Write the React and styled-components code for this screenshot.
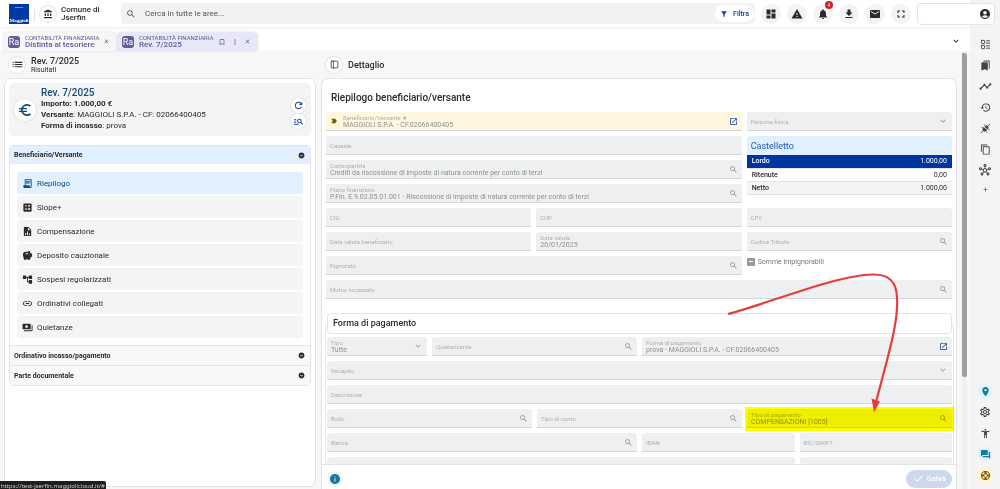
import React from "react";
import styled, { createGlobalStyle, css } from "styled-components";
import { LayoutList, PanelLeft } from "lucide-react";
import { PiPlugsConnectedFill } from "react-icons/pi";
import {
  MdAccessibilityNew,
  MdAccountBalance,
  MdAccountCircle,
  MdAccountTree,
  MdAdd,
  MdBookmarkBorder,
  MdBookmarks,
  MdCalculate,
  MdCheck,
  MdClose,
  MdContentCopy,
  MdDashboard,
  MdDownload,
  MdEmail,
  MdEuroSymbol,
  MdExpandMore,
  MdFilterAlt,
  MdForum,
  MdFullscreen,
  MdHistory,
  MdInfo,
  MdInsertLink,
  MdLabelImportant,
  MdList,
  MdManageSearch,
  MdMoreVert,
  MdNotifications,
  MdOpenInNew,
  MdOutlineHub,
  MdPayments,
  MdPlace,
  MdReceiptLong,
  MdRefresh,
  MdSavings,
  MdSearch,
  MdOutlineSettings,
  MdSupport,
  MdTimeline,
  MdWarning,
  MdExpandCircleDown,
} from "react-icons/md";

const colors = {
  ink: "#2b2b2b",
  blue: "#0b3ea0",
  navy: "#174a7c",
  sky: "#e0f0ff",
  violet: "#5f5c98",
  grey: "#f4f4f4",
  line: "#e3e4e5",
  field: "#eeeff0",
  teal: "#137a9c",
};

const GlobalStyle = createGlobalStyle`
  * {
    box-sizing: border-box;
  }

  body {
    margin: 0;
    color: ${colors.ink};
    font-family: Roboto, "Liberation Sans", sans-serif;
    font-size: 8px;
  }

  button, input, select {
    font: inherit;
    color: inherit;
  }

  button {
    border: 0;
    padding: 0;
    background: none;
    cursor: pointer;
  }

  svg {
    display: block;
    flex: none;
  }
`;

const Page = styled.div`
  display: flex;
  height: 100vh;
  overflow: hidden;
  background: #f7f7f7;
`;

const Main = styled.div`
  flex: 1;
  min-width: 0;
  display: flex;
  flex-direction: column;
`;

const Header = styled.header`
  display: flex;
  align-items: center;
  gap: 6px;
  height: 27px;
  flex: none;
  padding-left: 9px;
  background: #fff;
  box-shadow: 0 1px 3px rgba(0, 0, 0, 0.08);
  z-index: 1;
`;

const Brand = styled.div`
  display: flex;
  align-items: center;
  gap: 5px;
  width: 106px;
`;

const Divider = styled.span`
  width: 1px;
  height: 14px;
  background: ${colors.line};
`;

const OrgName = styled.strong`
  font-weight: 500;
  line-height: 8px;
  width: 44px;
`;

const RoundButton = styled.button`
  display: flex;
  align-items: center;
  justify-content: center;
  flex: none;
  width: ${(p) => p.$size || 16}px;
  height: ${(p) => p.$size || 16}px;
  border-radius: 50%;
  background: ${(p) => p.$bg || "#fff"};
  color: ${(p) => p.$color || colors.ink};
  box-shadow: ${(p) => (p.$flat ? "none" : `0 0 0 1px ${colors.line}`)};
`;

const Search = styled.label`
  flex: 1;
  display: flex;
  align-items: center;
  gap: 9px;
  height: 21px;
  padding: 0 1px 0 5px;
  border-radius: 4px;
  background: #f1f2f3;
  color: #555;
`;

const SearchInput = styled.input`
  flex: 1;
  min-width: 0;
  border: 0;
  padding: 0;
  background: none;
  outline: none;

  &::placeholder {
    color: #555;
    opacity: 1;
  }
`;

const FilterButton = styled.button`
  display: flex;
  align-items: center;
  gap: 5px;
  height: 17px;
  padding: 0 5px;
  border-radius: 9px;
  background: #fff;
  color: ${colors.blue};
  font-size: 7px;
  font-weight: 500;
`;

const Actions = styled.nav`
  display: flex;
  gap: 6px;
`;

const Notifications = styled.div`
  position: relative;
`;

const Badge = styled.span`
  position: absolute;
  top: -3px;
  right: 0;
  width: 8px;
  height: 8px;
  border-radius: 50%;
  background: #cb2027;
  color: #fff;
  font-size: 5px;
  line-height: 8px;
  text-align: center;
`;

const UserBox = styled.div`
  display: flex;
  align-items: center;
  justify-content: flex-end;
  flex: none;
  width: 78px;
  height: 22px;
  margin-right: -25px;
  padding-right: 3px;
  border: 1px solid ${colors.line};
  border-radius: 4px;
  background: #fff;
`;

const TabBar = styled.div`
  display: flex;
  align-items: flex-end;
  height: 24px;
  flex: none;
  padding: 0 9px 0 3px;
  background: #fff;
`;

const Tab = styled.div`
  display: flex;
  align-items: center;
  height: 19px;
  width: ${(p) => (p.$active ? 141 : 114)}px;
  padding: 0 7px 0 5px;
  border-radius: 5px 5px 0 0;
  background: ${(p) => (p.$active ? "#e8e7f5" : "#f6f6f7")};
  box-shadow: 0 0 2px rgba(0, 0, 0, 0.15);
  color: ${colors.violet};
`;

const TabIcon = styled.span`
  width: 12px;
  height: 12px;
  border-radius: 3px;
  background: ${colors.violet};
  color: #fff;
  font-size: 9px;
  line-height: 12px;
  text-align: center;
`;

const TabText = styled.div`
  flex: 1;
  margin-left: 5px;
  font-weight: 500;
  line-height: 8px;
  white-space: nowrap;
`;

const Overline = styled.div`
  font-size: 6px;
  font-weight: 400;
  line-height: 7px;
`;

const TabActions = styled.div`
  display: flex;
  gap: 5px;
`;

const TabsMenu = styled.button`
  margin: 0 0 5px auto;
`;

const Content = styled.div`
  flex: 1;
  min-height: 0;
  display: flex;
  gap: 5px;
  padding-left: 4px;
`;

const Side = styled.section`
  flex: 0 0 312px;
  display: flex;
  flex-direction: column;
  padding-bottom: 2px;
`;

const PaneHeader = styled.div`
  display: flex;
  align-items: center;
  gap: 6px;
  height: 27px;
  flex: none;
  padding-left: 5px;
`;

const PaneTitle = styled.h2`
  margin: 0;
  font-size: 9px;
  font-weight: 500;
  line-height: 10px;
`;

const PaneSubtitle = styled.p`
  margin: 0;
  font-size: 7px;
  line-height: 8px;
`;

const Card = styled.div`
  flex: 1;
  min-height: 0;
  display: flex;
  flex-direction: column;
  border: 1px solid ${colors.line};
  border-radius: 7px;
  background: #fff;
`;

const SideCard = styled(Card)`
  gap: 9px;
  padding: 4px;
`;

const Summary = styled.div`
  display: flex;
  align-items: center;
  gap: 5px;
  height: 53px;
  padding: 0 5px;
  border-radius: 6px;
  background: ${colors.grey};
`;

const SummaryText = styled.div`
  flex: 1;
  padding-bottom: 2px;
  line-height: 11px;

  b {
    font-weight: 700;
  }
`;

const SummaryTitle = styled.h3`
  margin: 0;
  font-size: 10px;
  font-weight: 500;
  color: ${colors.navy};
`;

const SummaryActions = styled.div`
  display: flex;
  flex-direction: column;
  gap: 1px;
  padding-top: 7px;
`;

const Accordion = styled.div`
  border: 1px solid ${colors.line};
  border-radius: 4px;
  overflow: hidden;
`;

const AccordionHeader = styled.button`
  display: flex;
  align-items: center;
  justify-content: space-between;
  width: 100%;
  height: ${(p) => (p.$open ? 18 : 20)}px;
  padding: 0 5px 0 4px;
  border-top: ${(p) => (p.$open ? "0" : `1px solid ${colors.line}`)};
  background: ${(p) => (p.$open ? colors.sky : "#f8f8f8")};
  font-size: 7px;
  font-weight: 700;
`;

const Menu = styled.nav`
  display: flex;
  flex-direction: column;
  gap: 2px;
  padding: 8px 7px 7px;
`;

const MenuItem = styled.a`
  display: flex;
  align-items: center;
  gap: 4px;
  height: 22px;
  padding: 0 5px;
  border-radius: 3px;
  background: ${(p) => (p.$active ? colors.sky : colors.grey)};
  color: ${(p) => (p.$active ? colors.navy : colors.ink)};
  text-decoration: none;
`;

const Detail = styled.section`
  flex: 1;
  min-width: 0;
  display: flex;
  flex-direction: column;
`;

const DetailCard = styled(Card)`
  border-bottom: 0;
  border-radius: 7px 7px 0 0;
`;

const FormArea = styled.form`
  flex: 1;
  min-height: 0;
  overflow: hidden;
  padding: 12px 2px 0 3px;
`;

const FormTitle = styled.h3`
  margin: 0 0 8px 6px;
  font-size: 10px;
  font-weight: 500;
  line-height: 13px;
`;

const Grid = styled.div`
  display: grid;
  grid-template-columns: repeat(12, 1fr);
  grid-auto-rows: 19px;
  gap: 5px;
`;

const MainGrid = styled(Grid)`
  padding: 0 2px 0 1px;
`;

const Group = styled.fieldset`
  margin: 14px 0 0;
  padding: 0 1px;
  border: 1px solid ${colors.line};
  border-radius: 4px;
  min-width: 0;
`;

const Legend = styled.legend`
  display: block;
  width: 100%;
  height: 21px;
  margin-bottom: 3px;
  padding: 0 5px;
  border: 1px solid ${colors.line};
  border-radius: 4px;
  font-size: 9px;
  font-weight: 500;
  line-height: 19px;
`;

const FieldBox = styled.div`
  grid-column: span ${(p) => p.$span};
  position: relative;
  display: flex;
  align-items: center;
  gap: 5px;
  min-width: 0;
  padding: 0 4px;
  border-bottom: 1px solid #d3d5d7;
  border-radius: 3px 3px 0 0;
  background: ${(p) => (p.$required ? "#fff6df" : colors.field)};
  color: #a0a2a4;
`;

const FieldBody = styled.div`
  flex: 1;
  min-width: 0;
  display: grid;
  align-items: center;
`;

const FieldLabel = styled.label`
  font-size: 6px;
  line-height: 7px;
  color: #aeb0b2;
  white-space: nowrap;
  ${(p) => !p.$floating && css`
    grid-area: 1 / 1;
  `}
`;

const controlStyle = css`
  appearance: none;
  width: 100%;
  height: 8px;
  padding: 0;
  border: 0;
  outline: none;
  background: none;
  font-size: 7px;
  line-height: 8px;
  opacity: 1;
  color: #8e9092;
  ${(p) => !p.$filled && css`
    grid-area: 1 / 1;
  `}
`;

const FieldInput = styled.input`
  ${controlStyle}
`;

const FieldSelect = styled.select`
  ${controlStyle}
`;

const FieldButton = styled.button`
  color: ${(p) => (p.$link ? colors.blue : "#8e9092")};
`;

const Highlight = styled.span`
  position: absolute;
  inset: -2px -2px -4px -2px;
  background: #ff0;
  mix-blend-mode: multiply;
  pointer-events: none;
`;

const Arrow = styled.svg`
  position: absolute;
  right: 50px;
  bottom: 12px;
  z-index: 2;
  pointer-events: none;
`;

const Totals = styled.table`
  grid-column: span 4;
  grid-row: span 3;
  align-self: start;
  width: 100%;
  border-collapse: collapse;
  font-size: 7px;
`;

const TotalsCaption = styled.caption`
  height: 19px;
  padding-left: 4px;
  border-radius: 3px 3px 0 0;
  background: ${colors.sky};
  color: #2159a8;
  font-size: 9px;
  line-height: 20px;
  text-align: left;
`;

const TotalsRow = styled.tr`
  height: 13px;
  background: ${(p) => p.$bg};
  color: ${(p) => p.$color || colors.ink};
  border-bottom: 1px solid ${colors.line};

  th, td {
    padding: 0 5px;
    font-weight: 500;
    text-align: left;
  }

  td {
    font-weight: 400;
    text-align: right;
  }
`;

const CheckField = styled.label`
  grid-column: span 4;
  display: flex;
  align-items: center;
  align-self: start;
  gap: 3px;
  height: 11px;
  font-size: 7px;
  color: #757779;
`;

const Checkbox = styled.input`
  appearance: none;
  display: grid;
  place-items: center;
  flex: none;
  width: 8px;
  height: 8px;
  margin: 0;
  border-radius: 1px;
  background: #98999b;

  &::after {
    content: "";
    width: 4px;
    height: 1px;
    background: #fff;
  }
`;

const Footer = styled.footer`
  display: flex;
  align-items: center;
  justify-content: space-between;
  height: 25px;
  flex: none;
  padding: 3px 4px 0 5px;
  border-top: 1px solid ${colors.line};
`;

const SaveButton = styled.button`
  display: flex;
  align-items: center;
  gap: 3px;
  height: 18px;
  padding: 0 6px 0 7px;
  border-radius: 9px;
  background: #cdd8ec;
  color: #fff;
  font-weight: 500;
`;

const Scrollbar = styled.div`
  width: 5px;
  flex: none;
  margin-right: 3px;
  background: #f0f0f0;
`;

const Thumb = styled.div`
  height: 74%;
  margin-top: 2px;
  border-radius: 0 4px 3px 3px;
  background: #9f9f9f;
`;

const Rail = styled.aside`
  width: 30px;
  flex: none;
  display: flex;
  flex-direction: column;
  justify-content: space-between;
  align-items: center;
  padding: 36px 0 6px;
  background: ${colors.grey};
  color: #555;
`;

const RailGroup = styled.div`
  display: flex;
  flex-direction: column;
  align-items: center;
  gap: 5px;
`;

const StatusUrl = styled.div`
  position: fixed;
  left: 0;
  bottom: 0;
  height: 8px;
  padding: 0 1px;
  border-radius: 0 2px 0 0;
  background: #1c1e20;
  color: #ccc;
  font-family: "Noto Sans", sans-serif;
  font-size: 6px;
  line-height: 10px;
  overflow: hidden;
`;

function Logo() {
  return (
    <svg width="20" height="20" viewBox="0 0 20 20" role="img" aria-label="Maggioli">
      <rect width="20" height="20" fill="#0039a6" />
      <text x="10" y="4" fontSize="2" fill="#fff" textAnchor="middle">GRUPPO</text>
      <text x="10" y="18" fontSize="5" fontWeight="700" fill="#fff" textAnchor="middle" fontFamily="Liberation Serif">
        Maggioli
      </text>
    </svg>
  );
}

function FileChart({ size }) {
  return (
    <svg width={size} height={size} viewBox="0 0 24 24" fill="currentColor" fillRule="evenodd">
      <path d="M14 2H6a2 2 0 0 0-2 2v16c0 1.100.9 2 2 2h12a2 2 0 0 0 2-2V8l-6-6zM13 3.500 18.500 9H13V3.500zM7 15h2v5H7v-5zM11 12h2v8h-2v-8zM15 16h2v4h-2v-4z" />
    </svg>
  );
}

function Field({ label, value, span, icon, select, required, highlight }) {
  const id = React.useId();
  const filled = Boolean(value);
  return (
    <FieldBox $span={span} $required={required}>
      {required && <MdLabelImportant size={8} color="#7a5c00" />}
      <FieldBody>
        <FieldLabel htmlFor={id} $floating={filled}>
          {label}
          {required && " ★"}
        </FieldLabel>
        {select ? (
          <FieldSelect id={id} $filled={filled} defaultValue={value}>
            <option>{value}</option>
          </FieldSelect>
        ) : (
          <FieldInput id={id} $filled={filled} defaultValue={value} readOnly />
        )}
      </FieldBody>
      {select && <MdExpandMore size={10} />}
      {icon === "search" && (
        <FieldButton type="button" aria-label={`Cerca ${label}`}>
          <MdSearch size={9} />
        </FieldButton>
      )}
      {icon === "open" && (
        <FieldButton type="button" $link aria-label={`Apri ${label}`}>
          <MdOpenInNew size={9} />
        </FieldButton>
      )}
      {highlight && (
        <>
          <Highlight />
          <Arrow width="180" height="145" viewBox="722 270 180 145">
            <path
              d="M728 314C767 304 836 275 873 274.5C896 274 898 290 897 308C896 330 887 360 876 402"
              fill="none"
              stroke="#e53e3e"
              strokeWidth="2.2"
            />
            <path d="M871.5 398.500L880 401.500L874 412.500Z" fill="#e53e3e" />
          </Arrow>
        </>
      )}
    </FieldBox>
  );
}

const headerActions = [
  ["Cruscotto", MdDashboard],
  ["Avvisi", MdWarning],
  ["Notifiche", MdNotifications, 4],
  ["Scarica", MdDownload],
  ["Posta", MdEmail],
  ["Schermo intero", MdFullscreen],
];

const menuItems = [
  ["Riepilogo", MdReceiptLong],
  ["Siope+", MdCalculate],
  ["Compensazione", FileChart],
  ["Deposito cauzionale", MdSavings],
  ["Sospesi regolarizzati", MdAccountTree],
  ["Ordinativi collegati", MdInsertLink],
  ["Quietanze", MdPayments],
];

const railTop = [
  { label: "Elenco", Icon: LayoutList },
  { label: "Segnalibri", Icon: MdBookmarks },
  { label: "Andamento", Icon: MdTimeline, size: 13 },
  { label: "Cronologia", Icon: MdHistory },
  { label: "Connessioni", Icon: PiPlugsConnectedFill },
  { label: "Copia", Icon: MdContentCopy },
  { label: "Rete", Icon: MdOutlineHub, size: 12 },
  { label: "Aggiungi", Icon: MdAdd, color: colors.blue, size: 7, box: 12 },
];

const railBottom = [
  { label: "Posizione", Icon: MdPlace, color: colors.teal, bg: "#e3f3fa" },
  { label: "Impostazioni", Icon: MdOutlineSettings, size: 12 },
  { label: "Accessibilità", Icon: MdAccessibilityNew },
  { label: "Chat", Icon: MdForum, color: colors.teal, bg: "#e3f3fa" },
  { label: "Assistenza", Icon: MdSupport, color: "#7a5c00", bg: "#fff3d0" },
];

function RailButtons({ items }) {
  return (
    <RailGroup>
      {items.map(({ label, Icon, color = "#444", bg = "none", size = 11, box }) => (
        <RoundButton key={label} aria-label={label} $flat $bg={bg} $color={color} $size={box}>
          <Icon size={size} />
        </RoundButton>
      ))}
    </RailGroup>
  );
}

export default function App() {
  return (
    <>
      <GlobalStyle />
      <Page>
        <Main>
          <Header>
            <Brand>
              <Logo />
              <Divider />
              <RoundButton aria-label="Ente">
                <MdAccountBalance size={10} />
              </RoundButton>
              <OrgName>Comune di Jserfin</OrgName>
            </Brand>
            <Search>
              <MdSearch size={10} />
              <SearchInput aria-label="Cerca" placeholder="Cerca in tutte le aree..." />
              <FilterButton type="button">
                <MdFilterAlt size={8} />
                Filtra
              </FilterButton>
            </Search>
            <Actions>
              {headerActions.map(([label, Icon, count]) => (
                <Notifications key={label}>
                  <RoundButton aria-label={label} $size={20} $flat $bg="#f3f3f3">
                    <Icon size={12} />
                  </RoundButton>
                  {count && <Badge>{count}</Badge>}
                </Notifications>
              ))}
            </Actions>
            <UserBox>
              <RoundButton $size={12} $flat aria-label="Utente">
                <MdAccountCircle size={12} />
              </RoundButton>
            </UserBox>
          </Header>

          <TabBar>
            <Tab>
              <TabIcon>Ra</TabIcon>
              <TabText>
                <Overline>CONTABILITÀ FINANZIARIA</Overline>
                Distinta al tesoriere
              </TabText>
              <button aria-label="Chiudi">
                <MdClose size={7} />
              </button>
            </Tab>
            <Tab $active>
              <TabIcon>Ra</TabIcon>
              <TabText>
                <Overline>CONTABILITÀ FINANZIARIA</Overline>
                Rev. 7/2025
              </TabText>
              <TabActions>
                <button aria-label="Segnalibro">
                  <MdBookmarkBorder size={8} />
                </button>
                <button aria-label="Altro">
                  <MdMoreVert size={8} />
                </button>
                <button aria-label="Chiudi">
                  <MdClose size={7} />
                </button>
              </TabActions>
            </Tab>
            <TabsMenu aria-label="Schede">
              <MdExpandMore size={10} />
            </TabsMenu>
          </TabBar>

          <Content>
            <Side>
              <PaneHeader>
                <RoundButton aria-label="Elenco risultati">
                  <MdList size={13} />
                </RoundButton>
                <div>
                  <PaneTitle>Rev. 7/2025</PaneTitle>
                  <PaneSubtitle>Risultati</PaneSubtitle>
                </div>
              </PaneHeader>
              <SideCard>
                <Summary>
                  <RoundButton as="span" $size={22} $color={colors.navy}>
                    <MdEuroSymbol size={16} />
                  </RoundButton>
                  <SummaryText>
                    <SummaryTitle>Rev. 7/2025</SummaryTitle>
                    <b>Importo: 1.000,00 €</b>
                    <br />
                    <b>Versante</b>: MAGGIOLI S.P.A. - CF: 02066400405
                    <br />
                    <b>Forma di incasso</b>: prova
                  </SummaryText>
                  <SummaryActions>
                    <RoundButton aria-label="Aggiorna" $size={15} $color={colors.blue}>
                      <MdRefresh size={11} />
                    </RoundButton>
                    <RoundButton aria-label="Dettagli" $size={15} $color={colors.blue}>
                      <MdManageSearch size={11} />
                    </RoundButton>
                  </SummaryActions>
                </Summary>
                <Accordion>
                  <AccordionHeader $open>
                    Beneficiario/Versante
                    <MdExpandCircleDown size={7} />
                  </AccordionHeader>
                  <Menu>
                    {menuItems.map(([label, Icon], i) => (
                      <MenuItem href="#" key={label} $active={i === 0}>
                        <Icon size={11} />
                        {label}
                      </MenuItem>
                    ))}
                  </Menu>
                  <AccordionHeader>
                    Ordinativo incasso/pagamento
                    <MdExpandCircleDown size={7} />
                  </AccordionHeader>
                  <AccordionHeader>
                    Parte documentale
                    <MdExpandCircleDown size={7} />
                  </AccordionHeader>
                </Accordion>
              </SideCard>
            </Side>

            <Detail>
              <PaneHeader>
                <RoundButton aria-label="Mostra pannello">
                  <PanelLeft size={9} />
                </RoundButton>
                <PaneTitle>Dettaglio</PaneTitle>
              </PaneHeader>
              <DetailCard>
                <FormArea>
                  <FormTitle>Riepilogo beneficiario/versante</FormTitle>
                  <MainGrid>
                    <Field
                      span={8}
                      label="Beneficiario/Versante"
                      value="MAGGIOLI S.P.A. - CF.02066400405"
                      icon="open"
                      required
                    />
                    <Field span={4} label="Persona fisica" select />
                    <Field span={8} label="Causale" />
                    <Totals>
                      <TotalsCaption>Castelletto</TotalsCaption>
                      <tbody>
                        <TotalsRow $bg="#0035a0" $color="#fff">
                          <th scope="row">Lordo</th>
                          <td>1.000,00</td>
                        </TotalsRow>
                        <TotalsRow $bg="#fff">
                          <th scope="row">Ritenute</th>
                          <td>0,00</td>
                        </TotalsRow>
                        <TotalsRow $bg={colors.grey}>
                          <th scope="row">Netto</th>
                          <td>1.000,00</td>
                        </TotalsRow>
                      </tbody>
                    </Totals>
                    <Field
                      span={8}
                      label="Contropartita"
                      value="Crediti da riscossione di imposte di natura corrente per conto di terzi"
                      icon="search"
                    />
                    <Field
                      span={8}
                      label="Piano finanziario"
                      value="P.Fin. E.9.02.05.01.001 - Riscossione di imposte di natura corrente per conto di terzi"
                      icon="search"
                    />
                    <Field span={4} label="CIG" />
                    <Field span={4} label="CUP" />
                    <Field span={4} label="CPV" />
                    <Field span={4} label="Data valuta beneficiario" />
                    <Field span={4} label="Data valuta" value="20/01/2025" />
                    <Field span={4} label="Codice Tributo" icon="search" />
                    <Field span={8} label="Pignorato" icon="search" />
                    <CheckField>
                      <Checkbox type="checkbox" />
                      Somme impignorabili
                    </CheckField>
                    <Field span={12} label="Mutuo incassato" icon="search" />
                  </MainGrid>

                  <Group>
                    <Legend>Forma di pagamento</Legend>
                    <Grid>
                      <Field span={2} label="Tipo" value="Tutte" select />
                      <Field span={4} label="Quietanzante" icon="search" />
                      <Field
                        span={6}
                        label="Forma di pagamento"
                        value="prova - MAGGIOLI S.P.A. - CF.02066400405"
                        icon="open"
                      />
                      <Field span={12} label="Recapito" select />
                      <Field span={12} label="Descrizione" />
                      <Field span={4} label="Bollo" icon="search" />
                      <Field span={4} label="Tipo di conto" icon="search" />
                      <Field
                        span={4}
                        label="Tipo di pagamento"
                        value="COMPENSAZIONI [1005]"
                        icon="search"
                        highlight
                      />
                      <Field span={6} label="Banca" icon="search" />
                      <Field span={3} label="IBAN" />
                      <Field span={3} label="BIC/SWIFT" />
                      <Field span={9} label="" />
                      <Field span={3} label="" />
                    </Grid>
                  </Group>
                </FormArea>
                <Footer>
                  <RoundButton aria-label="Informazioni" $flat $bg="#f3f3f3" $color={colors.teal}>
                    <MdInfo size={12} />
                  </RoundButton>
                  <SaveButton>
                    <MdCheck size={11} />
                    Salva
                  </SaveButton>
                </Footer>
              </DetailCard>
            </Detail>
            <Scrollbar>
              <Thumb />
            </Scrollbar>
          </Content>
        </Main>
        <Rail>
          <RailButtons items={railTop} />
          <RailButtons items={railBottom} />
        </Rail>
      </Page>
      <StatusUrl>https://test-jserfin.maggiolicloud.it/#</StatusUrl>
    </>
  );
}
